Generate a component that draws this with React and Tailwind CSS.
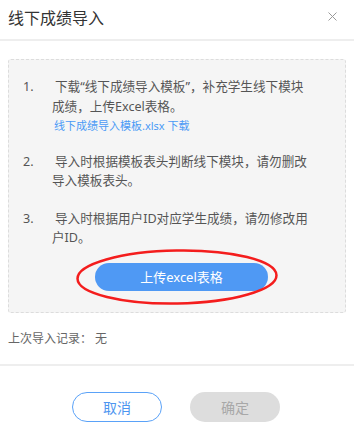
import React from "react";

export default function App() {
  const font = { fontFamily: '"Noto Sans", "Noto Sans CJK SC", sans-serif' };
  return (
    <div className="w-[354px] h-[428px] bg-white overflow-hidden" style={font}>
      <div className="h-[41px] border-b-2 border-[#eeeeee] flex items-center justify-between pl-[8px] pr-[17px]">
        <span className="text-[16px] text-[#333] leading-none pb-[3px]">线下成绩导入</span>
        <svg width="9" height="9" viewBox="0 0 9 9" className="mb-[6px]">
          <path d="M0.5 0.5 L8.5 8.5 M8.5 0.5 L0.5 8.5" stroke="#9a9a9a" strokeWidth="1" />
        </svg>
      </div>
      <div className="mx-[8px] mt-[18px] h-[254px] border border-dashed border-[#dcdcdc] rounded-[3px] bg-[#f5f5f5] pt-[17px] pl-[14px] text-[12.6px] text-[#555] leading-[20px]">
        <div className="flex">
          <span className="w-[29px] shrink-0">1.</span>
          <div className="w-[258px]">
            <div className="indent-[3px]">下载“线下成绩导入模板”，补充学生线下模块成绩，上传Excel表格。</div>
            <div className="text-[11px] leading-[16px] mt-[1px] text-[#4a9af5] pl-[2px]">线下成绩导入模板.xlsx 下载</div>
          </div>
        </div>
        <div className="flex mt-[18px] leading-[19px]">
          <span className="w-[29px] shrink-0">2.</span>
          <div className="w-[258px] indent-[3px]">导入时根据模板表头判断线下模块，请勿删改导入模板表头。</div>
        </div>
        <div className="flex mt-[19px] leading-[19px]">
          <span className="w-[29px] shrink-0">3.</span>
          <div className="w-[258px] indent-[3px]">导入时根据用户ID对应学生成绩，请勿修改用户ID。</div>
        </div>
        <div className="relative mt-[16px] ml-[72px] w-[173px] h-[28px]">
          <div className="w-full h-full rounded-full bg-[#4f99f4] text-white text-[13px] flex items-center justify-center">上传excel表格</div>
          <svg className="absolute left-[-20px] top-[-15px]" width="206" height="58" viewBox="0 0 206 58">
            <ellipse cx="102" cy="29" rx="99.5" ry="26.5" fill="none" stroke="#f41d1d" strokeWidth="2.5" transform="rotate(-1 102 29)" />
          </svg>
        </div>
      </div>
      <div className="mt-[18px] pl-[8px] text-[12px] leading-[16px] text-[#666]">上次导入记录： 无</div>
      <div className="mt-[17px] border-t-2 border-[#eeeeee] pt-[26px] flex justify-center gap-[28px] pr-[2px]">
        <div className="w-[90px] h-[30px] rounded-full border border-[#5aa2f8] text-[#4d96f0] text-[14px] flex items-center justify-center">取消</div>
        <div className="w-[90px] h-[30px] rounded-full bg-[#dddddd] text-[#a8a8a8] text-[14px] flex items-center justify-center">确定</div>
      </div>
    </div>
  );
}
